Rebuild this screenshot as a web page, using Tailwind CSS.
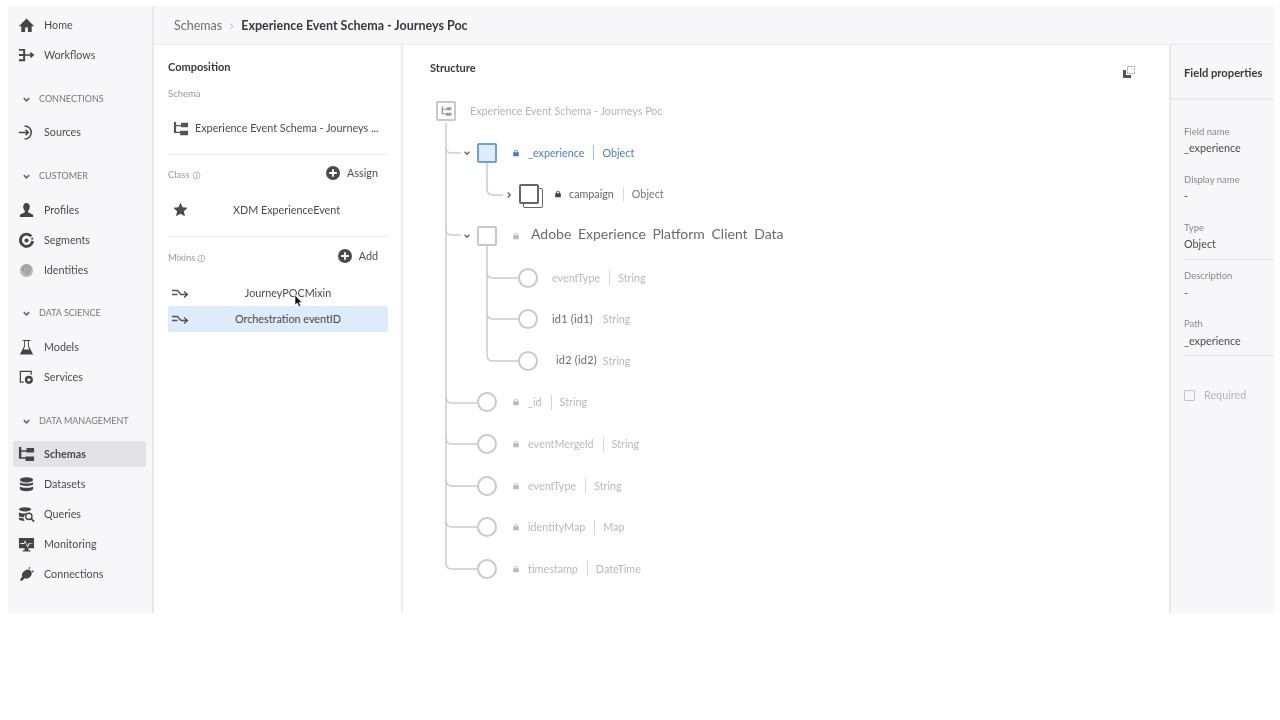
<!DOCTYPE html>
<html lang="en">
<head>
    <meta charset="UTF-8">
    <title>Experience Event Schema - Journeys Poc</title>
    <script src="https://cdn.jsdelivr.net/npm/@tailwindcss/browser@4"></script>
</head>
<body class="bg-white h-[720px] w-[1280px] overflow-hidden font-['Lato',sans-serif] text-[#4b4b4b]">
    <!-- shared icons -->
    <svg class="hidden">
        <symbol id="i-schema" viewBox="0 0 18 18"><path fill="currentColor" d="M1 1h2.500v3.500H9V2h8v5H9V6H3.500v6H8v-1h9v5H8v-2.500H1z"/></symbol>
        <symbol id="i-mixin" viewBox="0 0 18 18"><path fill="none" stroke="currentColor" stroke-width="1.400" d="M1 5.500h5.500l3.500 4h6.500M1 9.500h5.500M13 6.500l3.500 3-3.500 3"/></symbol>
        <symbol id="i-lock" viewBox="0 0 10 10"><path fill="currentColor" fill-rule="evenodd" d="M2.800 4V3a2.200 2.200 0 0 1 4.400 0v1H8.500v5h-7V4zM3.800 4h2.400V3a1.200 1.200 0 0 0-2.400 0z"/></symbol>
        <symbol id="i-down" viewBox="0 0 10 10"><path fill="none" stroke="currentColor" stroke-width="1.700" d="M2 3.500l3 3 3-3"/></symbol>
        <symbol id="i-add" viewBox="0 0 14 14"><circle cx="7" cy="7" r="7" fill="currentColor"/><path stroke="#fff" stroke-width="1.800" d="M7 3.200v7.600M3.200 7h7.600"/></symbol>
        <symbol id="i-info" viewBox="0 0 10 10"><circle cx="5" cy="5" r="3.800" fill="none" stroke="currentColor" stroke-width=".8"/><path stroke="currentColor" stroke-width="1" d="M5 4.300v3M5 2.500v1"/></symbol>
    </svg>

    <div class="flex w-[1266px] h-[607px] ml-2 mt-[6px]">
        <!-- left nav -->
        <nav class="w-[146px] shrink-0 bg-[#f7f7f9] border-r-2 border-[#e8e8ea] pt-1 pl-[5px] pr-[6px] text-[10.750px] blur-[0.5px]">
            <a class="flex items-center h-[30px] pl-[5px] gap-[9px]"><svg class="w-[17px] h-[17px] text-[#444]" viewBox="0 0 18 18"><path fill="currentColor" d="M9 1.500L.8 9.800h2.700V16H7.500v-5h3v5h4V9.800h2.700z"/></svg><span>Home</span></a>
            <a class="flex items-center h-[30px] pl-[5px] gap-[9px]"><svg class="w-[17px] h-[17px] text-[#444]" viewBox="0 0 18 18"><path fill="none" stroke="currentColor" stroke-width="2" d="M1 3h5.500v11H1M1 8.500h5.500"/><path fill="none" stroke="currentColor" stroke-width="1.700" d="M7 8.500h9M13 6l3 2.500-3 2.500"/></svg><span>Workflows</span></a>

            <div class="flex items-center h-[14px] mt-[22px] mb-[11px] pl-[9px] gap-[8px] text-[9px] text-[#777]"><svg class="w-[9px] h-[9px] text-[#666]"><use href="#i-down"/></svg><span>CONNECTIONS</span></div>
            <a class="flex items-center h-[30px] pl-[5px] gap-[9px]"><svg class="w-[17px] h-[17px] text-[#444]" viewBox="0 0 18 18"><path fill="none" stroke="currentColor" stroke-width="1.600" d="M7 2a7 7 0 0 1 0 14M1 9h10M8 6l3 3-3 3"/></svg><span>Sources</span></a>

            <div class="flex items-center h-[14px] mt-[22px] mb-[12px] pl-[9px] gap-[8px] text-[9px] text-[#777]"><svg class="w-[9px] h-[9px] text-[#666]"><use href="#i-down"/></svg><span>CUSTOMER</span></div>
            <a class="flex items-center h-[30px] pl-[5px] gap-[9px]"><svg class="w-[17px] h-[17px] text-[#444]" viewBox="0 0 18 18"><path fill="currentColor" d="M9 1c2 0 3.500 1.500 3.500 4 0 2-1 3.500-1.800 4.500v1.300L16 13.500V16H2v-2.500l5.300-2.700V9.500C6.500 8.500 5.500 7 5.500 5 5.500 2.500 7 1 9 1z"/></svg><span>Profiles</span></a>
            <a class="flex items-center h-[30px] pl-[5px] gap-[9px]"><svg class="w-[17px] h-[17px] text-[#444]" viewBox="0 0 18 18"><path fill="none" stroke="currentColor" stroke-width="3" d="M14 4.500a6.500 6.500 0 1 0 1.500 5"/><circle cx="9" cy="9" r="2.200" fill="currentColor"/><circle cx="15" cy="7" r="1.200" fill="currentColor"/></svg><span>Segments</span></a>
            <a class="flex items-center h-[30px] pl-[5px] gap-[9px]"><svg class="w-[17px] h-[17px] text-[#8a8a8a]" viewBox="0 0 18 18"><circle cx="9" cy="9" r="7" fill="#bdbdbd"/><path fill="none" stroke="currentColor" d="M4 8a5 5 0 0 1 10 0M5.500 11V8.500a3.500 3.500 0 0 1 7 0V12M8 14V8.500a1.200 1.200 0 0 1 2.400 0V14"/></svg><span>Identities</span></a>

            <div class="flex items-center h-[14px] mt-[21px] mb-[12px] pl-[9px] gap-[8px] text-[9px] text-[#777]"><svg class="w-[9px] h-[9px] text-[#666]"><use href="#i-down"/></svg><span>DATA SCIENCE</span></div>
            <a class="flex items-center h-[30px] pl-[5px] gap-[9px]"><svg class="w-[17px] h-[17px] text-[#444]" viewBox="0 0 18 18"><path fill="currentColor" d="M5 1h8v1h-1.500v5.500L16 16.500H2L6.500 7.500V2H5zM7.500 2v5.800L6 11h6l-1.500-3.200V2z"/></svg><span>Models</span></a>
            <a class="flex items-center h-[30px] pl-[5px] gap-[9px]"><svg class="w-[17px] h-[17px] text-[#444]" viewBox="0 0 18 18"><path fill="none" stroke="currentColor" stroke-width="1.300" d="M6 14H2.500V2.500H14V6"/><circle cx="11.500" cy="11.500" r="3" fill="none" stroke="currentColor" stroke-width="2.500"/></svg><span>Services</span></a>

            <div class="flex items-center h-[14px] mt-[22px] mb-[13px] pl-[9px] gap-[8px] text-[9px] text-[#777]"><svg class="w-[9px] h-[9px] text-[#666]"><use href="#i-down"/></svg><span>DATA MANAGEMENT</span></div>
            <a class="flex items-center h-[26px] mb-[2px] pl-[5px] gap-[9px] bg-[#e3e3e5] rounded-[2px] font-bold"><svg class="w-[17px] h-[17px] text-[#444]"><use href="#i-schema"/></svg><span>Schemas</span></a>
            <a class="flex items-center h-[30px] pl-[5px] gap-[9px]"><svg class="w-[17px] h-[17px] text-[#444]" viewBox="0 0 18 18"><ellipse cx="9" cy="4" rx="7" ry="2.800" fill="currentColor"/><path fill="currentColor" d="M2 6.500c1.500 2 12.500 2 14 0V9c-1.500 2-12.500 2-14 0zM2 11c1.500 2 12.500 2 14 0v3c-1.500 2.800-12.500 2.800-14 0z"/></svg><span>Datasets</span></a>
            <a class="flex items-center h-[30px] pl-[5px] gap-[9px]"><svg class="w-[17px] h-[17px] text-[#444]" viewBox="0 0 18 18"><ellipse cx="7.500" cy="3.500" rx="6.500" ry="2.300" fill="currentColor"/><path fill="currentColor" d="M1 6.500c1.500 1.500 8 2 11 .5L7.500 9 6 12c-2 0-4-.5-5-1.500zM1 12c1 .8 3 1.200 5 1.300l1 2.500c-3 0-5-.5-6-1.500z"/><circle cx="11.500" cy="11" r="3.300" fill="none" stroke="currentColor" stroke-width="1.400"/><path stroke="currentColor" stroke-width="1.800" d="M14 13.500l3 3"/></svg><span>Queries</span></a>
            <a class="flex items-center h-[30px] pl-[5px] gap-[9px]"><svg class="w-[17px] h-[17px] text-[#444]" viewBox="0 0 18 18"><path fill="currentColor" fill-rule="evenodd" d="M1 2h16v11h-6v2h2v1.500H5V15h2v-2H1zM2.500 7.500h3.500l1.500-3 2.500 6 1.500-3h4V8H12.500l-2.300 4.500L7.500 6.500 6.500 8.500h-4z"/></svg><span>Monitoring</span></a>
            <a class="flex items-center h-[30px] pl-[5px] gap-[9px]"><svg class="w-[17px] h-[17px] text-[#444]" viewBox="0 0 18 18"><path fill="currentColor" d="M9 4c2-1 4 0 5 2 1 2 .5 4-1 5.500-1.500 1.500-4 2.500-6 1.500L4 16l-2-1.500 2.500-3C3.500 9.500 4.500 6 9 4zM11 2.500l1-1.500 1.200.8-1 1.500zM14 6l2-1.500.8 1.200-2 1.500z"/></svg><span>Connections</span></a>
        </nav>

        <div class="flex-1 min-w-0 flex flex-col">
            <!-- breadcrumb -->
            <header class="h-[39px] shrink-0 flex items-center pl-5 pt-[3px] gap-[6px] bg-[#f7f7f9] border-b border-[#eaeaec] text-[12.500px] blur-[0.5px]">
                <span class="text-[#707070]">Schemas</span>
                <svg class="w-[7px] h-[7px] text-[#aaa]" viewBox="0 0 10 10"><path fill="none" stroke="currentColor" stroke-width="1.300" d="M3 1l4 4-4 4"/></svg>
                <span class="font-bold text-[#3a3a3a]">Experience Event Schema - Journeys Poc</span>
            </header>

            <div class="flex flex-1 min-h-0">
                <!-- composition -->
                <aside class="w-[249px] shrink-0 border-r-2 border-[#ececee] pt-[14px] px-[14px] text-[10.800px] blur-[0.5px]">
                    <h2 class="h-4 leading-4 text-[11px] font-bold text-[#3a3a3a]">Composition</h2>
                    <div class="mt-[12px] h-[14px] leading-[14px] text-[9.500px] text-[#9a9a9a]">Schema</div>
                    <div class="flex items-center h-[54px] pl-[5px] pt-[2px] gap-[6px] border-b border-[#eeeeee] w-[220px]">
                        <svg class="w-[16px] h-[16px] text-[#555]"><use href="#i-schema"/></svg>
                        <span class="whitespace-nowrap">Experience Event Schema - Journeys ...</span>
                    </div>
                    <div class="flex items-center justify-between h-[36px] w-[220px] pr-[10px]">
                        <span class="text-[9.500px] text-[#9a9a9a] flex items-center gap-[2px] mt-1">Class <svg class="w-[9px] h-[9px]"><use href="#i-info"/></svg></span>
                        <span class="flex items-center gap-[7px]"><svg class="w-[14px] h-[14px] text-[#4b4b4b]"><use href="#i-add"/></svg>Assign</span>
                    </div>
                    <div class="relative flex items-center justify-center h-[46px] w-[220px] border-b border-[#eeeeee] pb-[6px] pl-[17px]">
                        <svg class="absolute left-[5px] top-[11px] w-[15px] h-[15px] text-[#4b4b4b]" viewBox="0 0 18 18"><path fill="currentColor" d="M9 .8l2.500 5.500 6 .7-4.400 4 1.200 6L9 14l-5.300 3 1.200-6-4.400-4 6-.7z"/></svg>
                        <span>XDM ExperienceEvent</span>
                    </div>
                    <div class="flex items-center justify-between h-[38px] w-[220px] pr-[10px]">
                        <span class="text-[9.500px] text-[#9a9a9a] flex items-center gap-[2px] mt-1">Mixins <svg class="w-[9px] h-[9px]"><use href="#i-info"/></svg></span>
                        <span class="flex items-center gap-[7px]"><svg class="w-[14px] h-[14px] text-[#4b4b4b]"><use href="#i-add"/></svg>Add</span>
                    </div>
                    <div class="relative flex items-center justify-center h-[26px] w-[220px] mt-[5px] pl-[20px]">
                        <svg class="absolute left-[3px] top-[5px] w-[18px] h-[18px] text-[#555]"><use href="#i-mixin"/></svg>
                        <span>JourneyPOCMixin</span>
                        <svg class="absolute left-[126px] top-[14px] w-[9px] h-[14px]" viewBox="0 0 9 14"><path fill="#111" stroke="#fff" stroke-width=".6" d="M1 1v10l2.400-2 1.600 4 1.800-.8L5.200 8.500H8z"/></svg>
                    </div>
                    <div class="relative flex items-center justify-center h-[26px] w-[220px] bg-[#deebfa] rounded-[2px] pl-[20px]">
                        <svg class="absolute left-[3px] top-[5px] w-[18px] h-[18px] text-[#555]"><use href="#i-mixin"/></svg>
                        <span>Orchestration eventID</span>
                    </div>
                </aside>

                <!-- structure -->
                <main class="relative flex-1 min-w-0 pt-[15px]">
                    <h2 class="h-[16px] leading-4 pl-[27px] text-[11px] font-bold text-[#3a3a3a] blur-[0.5px]">Structure</h2>
                    <svg class="absolute right-[33px] top-[20px] w-[14px] h-[14px] text-[#555] blur-[0.3px]" viewBox="0 0 14 14"><path fill="currentColor" d="M1 5h3v5h5v3H1z"/><path fill="none" stroke="#999" stroke-width="1" stroke-dasharray="2 1" d="M5.500 1.500h7v7h-7z"/></svg>

                    <!-- connector lines of the tree -->
                    <svg class="absolute left-0 top-[0.500px] w-[300px] h-[560px] blur-[0.5px]" viewBox="0 0 300 560" fill="none" stroke="#cccccc" stroke-width="1.500">
                        <path d="M43 77V517q0 6 6 6H74"/>
                        <path d="M43 102q0 5 6 5H58M43 184q0 5 6 5H58M43 351q0 6 6 6H74M43 392q0 6 6 6H74M43 434q0 6 6 6H74M43 475q0 6 6 6H74"/>
                        <path d="M84 117V143q0 6 6 6H100"/>
                        <path d="M84 199V309q0 6 6 6H115M84 226q0 6 6 6H115M84 267q0 6 6 6H115"/>
                    </svg>

                    <div class="relative mt-[14.500px] h-[500px] text-[10.750px]">
                        <div class="flex items-center h-[41.600px] pl-[33px] text-[#b4b4b4] blur-[0.5px]">
                            <div class="w-5 h-5 flex items-center justify-center bg-white border-2 border-[#c8c8c8] rounded-[2px]"><svg class="w-[11px] h-[11px] text-[#999]"><use href="#i-schema"/></svg></div>
                            <span class="ml-[14px]">Experience Event Schema - Journeys Poc</span>
                        </div>
                        <div class="relative flex items-center h-[41.600px] pl-[74px] text-[#4c7cc4] blur-[0.5px]">
                            <svg class="absolute left-[60px] top-[17px] w-2 h-2 text-[#666]"><use href="#i-down"/></svg>
                            <div class="w-5 h-5 bg-[#e0ecfb] border-2 border-[#6f9fe0] rounded-[2px]"></div>
                            <svg class="ml-[15px] w-2 h-2 text-[#4c7cc4]"><use href="#i-lock"/></svg>
                            <span class="ml-[8px]">_experience</span>
                            <span class="ml-[9px] w-px h-[15px] bg-[#9dbce6]"></span>
                            <span class="ml-2">Object</span>
                        </div>
                        <div class="relative flex items-center h-[41.600px] pl-[116px] blur-[0.5px]">
                            <svg class="absolute left-[102px] top-[17px] w-2 h-2 text-[#666] -rotate-90"><use href="#i-down"/></svg>
                            <div class="relative w-[20px] h-[20px] -mt-[1px] bg-white border-2 border-[#666] rounded-[2px] shadow-[4px_4px_0_-1px_#fff,4px_4px_0_0_#666]"></div>
                            <svg class="ml-[15px] w-2 h-2 text-[#444]"><use href="#i-lock"/></svg>
                            <span class="ml-[7px] text-[#666]">campaign</span>
                            <span class="ml-[9px] w-px h-[15px] bg-[#ddd]"></span>
                            <span class="ml-2 text-[#777]">Object</span>
                        </div>
                        <div class="relative flex items-center h-[41.600px] pl-[74px]">
                            <svg class="absolute left-[60px] top-[17px] w-2 h-2 text-[#666] blur-[0.5px]"><use href="#i-down"/></svg>
                            <div class="w-5 h-5 bg-white border-2 border-[#c8c8c8] rounded-[2px] blur-[0.5px]"></div>
                            <svg class="ml-[15px] w-2 h-2 text-[#bbb] blur-[0.5px]"><use href="#i-lock"/></svg>
                            <span class="ml-[11px] -mt-[5px] text-[14px] text-[#6b6b6b] [word-spacing:3px]">Adobe Experience Platform Client Data</span>
                        </div>

                        <div class="flex items-center h-[41.600px] pl-[115px] text-[#b8b8b8]">
                            <div class="w-5 h-5 bg-white border-2 border-[#c8c8c8] rounded-full blur-[0.5px]"></div>
                            <span class="ml-[14px] blur-[0.5px]">eventType</span>
                            <span class="ml-[9px] w-px h-[15px] bg-[#d5d5d5] blur-[0.5px]"></span>
                            <span class="ml-2 blur-[0.5px]">String</span>
                        </div>
                        <div class="flex items-center h-[41.600px] pl-[115px] text-[#b8b8b8]">
                            <div class="w-5 h-5 bg-white border-2 border-[#c8c8c8] rounded-full blur-[0.5px]"></div>
                            <span class="ml-[14px] text-[#6b6b6b] text-[11px] tracking-[0.2px]">id1 (id1)</span>
                            <span class="ml-[10px] blur-[0.5px]">String</span>
                        </div>
                        <div class="flex items-center h-[41.600px] pl-[115px] text-[#b8b8b8]">
                            <div class="w-5 h-5 bg-white border-2 border-[#c8c8c8] rounded-full blur-[0.5px]"></div>
                            <span class="ml-[18px] -mt-[2px] text-[#6b6b6b] text-[11px] tracking-[0.2px]">id2 (id2)</span>
                            <span class="ml-[6px] blur-[0.5px]">String</span>
                        </div>

                        <div class="flex items-center h-[41.600px] pl-[74px] text-[#b8b8b8] blur-[0.5px]">
                            <div class="w-5 h-5 bg-white border-2 border-[#c8c8c8] rounded-full"></div>
                            <svg class="ml-[15px] w-2 h-2 text-[#bbb]"><use href="#i-lock"/></svg>
                            <span class="ml-[8px]">_id</span>
                            <span class="ml-[9px] w-px h-[15px] bg-[#d5d5d5]"></span>
                            <span class="ml-2">String</span>
                        </div>
                        <div class="flex items-center h-[41.600px] pl-[74px] text-[#b8b8b8] blur-[0.5px]">
                            <div class="w-5 h-5 bg-white border-2 border-[#c8c8c8] rounded-full"></div>
                            <svg class="ml-[15px] w-2 h-2 text-[#bbb]"><use href="#i-lock"/></svg>
                            <span class="ml-[8px]">eventMergeId</span>
                            <span class="ml-[9px] w-px h-[15px] bg-[#d5d5d5]"></span>
                            <span class="ml-2">String</span>
                        </div>
                        <div class="flex items-center h-[41.600px] pl-[74px] text-[#b8b8b8] blur-[0.5px]">
                            <div class="w-5 h-5 bg-white border-2 border-[#c8c8c8] rounded-full"></div>
                            <svg class="ml-[15px] w-2 h-2 text-[#bbb]"><use href="#i-lock"/></svg>
                            <span class="ml-[8px]">eventType</span>
                            <span class="ml-[9px] w-px h-[15px] bg-[#d5d5d5]"></span>
                            <span class="ml-2">String</span>
                        </div>
                        <div class="flex items-center h-[41.600px] pl-[74px] text-[#b8b8b8] blur-[0.5px]">
                            <div class="w-5 h-5 bg-white border-2 border-[#c8c8c8] rounded-full"></div>
                            <svg class="ml-[15px] w-2 h-2 text-[#bbb]"><use href="#i-lock"/></svg>
                            <span class="ml-[8px]">identityMap</span>
                            <span class="ml-[9px] w-px h-[15px] bg-[#d5d5d5]"></span>
                            <span class="ml-2">Map</span>
                        </div>
                        <div class="flex items-center h-[41.600px] pl-[74px] text-[#b8b8b8] blur-[0.5px]">
                            <div class="w-5 h-5 bg-white border-2 border-[#c8c8c8] rounded-full"></div>
                            <svg class="ml-[15px] w-2 h-2 text-[#bbb]"><use href="#i-lock"/></svg>
                            <span class="ml-[8px]">timestamp</span>
                            <span class="ml-[9px] w-px h-[15px] bg-[#d5d5d5]"></span>
                            <span class="ml-2">DateTime</span>
                        </div>
                    </div>
                </main>

                <!-- field properties -->
                <aside class="w-[105px] shrink-0 bg-[#f7f7f9] border-l-2 border-[#e8e8ea] text-[10.800px] blur-[0.5px]">
                    <div class="h-[55px] pl-[13px] pt-[3px] flex items-center border-b-2 border-[#ececee] text-[11.200px] font-bold text-[#3a3a3a]">Field properties</div>
                    <div class="pl-[13px] pt-[23px]">
                        <div class="h-[17px] text-[9.500px] text-[#888] leading-[17px]">Field name</div>
                        <div class="h-[31px] leading-[16px]">_experience</div>
                        <div class="h-[17px] text-[9.500px] text-[#888] leading-[17px]">Display name</div>
                        <div class="h-[31px] leading-[16px]">-</div>
                        <div class="h-[17px] text-[9.500px] text-[#888] leading-[17px]">Type</div>
                        <div class="h-[24px] leading-[16px] border-b border-[#e4e4e6]">Object</div>
                        <div class="h-[17px] mt-[7px] text-[9.500px] text-[#888] leading-[17px]">Description</div>
                        <div class="h-[31px] leading-[17px]">-</div>
                        <div class="h-[17px] text-[9.500px] text-[#888] leading-[17px]">Path</div>
                        <div class="h-[24px] leading-[17px] border-b border-[#e4e4e6]">_experience</div>
                        <div class="flex items-center gap-[9px] mt-[31px] text-[#b4b4b4]"><span class="w-[11px] h-[11px] border border-[#c4c4c4] rounded-[1px]"></span>Required</div>
                    </div>
                </aside>
            </div>
        </div>
    </div>
</body>
</html>
